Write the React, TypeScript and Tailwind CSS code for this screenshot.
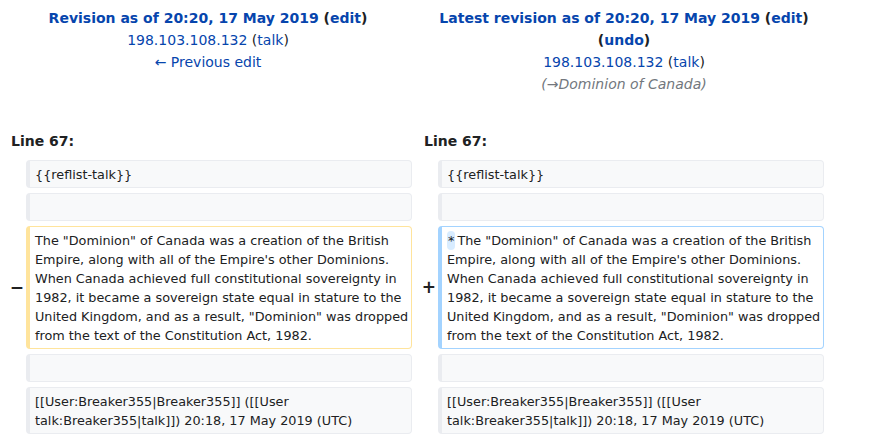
import React from 'react';

const para =
  'The "Dominion" of Canada was a creation of the British Empire, along with all of the Empire\'s other Dominions. When Canada achieved full constitutional sovereignty in 1982, it became a sovereign state equal in stature to the United Kingdom, and as a result, "Dominion" was dropped from the text of the Constitution Act, 1982.';

const sig = '[[User:Breaker355|Breaker355]] ([[User talk:Breaker355|talk]]) 20:18, 17 May 2019 (UTC)';

const Context = ({ children }: { children?: React.ReactNode }) => (
  <div className="min-h-[28px] rounded-[4px] border border-l-4 border-[#eaecf0] bg-[#f8f9fa] pl-[5px] pr-[2px] py-[3.5px] whitespace-pre-wrap break-words">
    {children}
  </div>
);

const Marker = ({ sign }: { sign?: string }) => (
  <div className="flex items-center justify-end pr-[2px] text-[17px] font-bold leading-none text-[#202122]">{sign}</div>
);

const App = () => {
  return (
    <div className="w-[874px] h-[439px] overflow-hidden bg-white text-[#202122] font-['DejaVu_Sans',sans-serif]">
      {/* шапка диффа */}
      <div className="grid grid-cols-[408px_408px] gap-x-2 pl-1 pt-[7px] text-[14px] leading-[22px] text-center">
        <div>
          <div className="font-bold">
            <a className="text-[#0645ad]">Revision as of 20:20, 17 May 2019</a> (<a className="text-[#0645ad]">edit</a>)
          </div>
          <div>
            <a className="text-[#0645ad]">198.103.108.132</a> (<a className="text-[#0645ad]">talk</a>)
          </div>
          <div>
            <a className="text-[#0645ad]">← Previous edit</a>
          </div>
        </div>
        <div>
          <div className="font-bold">
            <a className="text-[#0645ad]">Latest revision as of 20:20, 17 May 2019</a> (<a className="text-[#0645ad]">edit</a>)
          </div>
          <div className="font-bold">
            (<a className="text-[#0645ad]">undo</a>)
          </div>
          <div>
            <a className="text-[#0645ad]">198.103.108.132</a> (<a className="text-[#0645ad]">talk</a>)
          </div>
          <div className="italic text-[#72777d]">(→Dominion of Canada)</div>
        </div>
      </div>

      {/* строки */}
      <div className="mt-[35px] grid grid-cols-[22px_386px_26px_386px] gap-y-[5px] pl-1 text-[12.8px] leading-[19px]">
        <div className="col-span-2 pl-[7px] text-[14px] leading-[22px] font-bold mb-[3px]">Line 67:</div>
        <div className="col-span-2 pl-[12px] text-[14px] leading-[22px] font-bold mb-[3px]">Line 67:</div>

        <Marker />
        <Context>{'{{reflist-talk}}'}</Context>
        <Marker />
        <Context>{'{{reflist-talk}}'}</Context>

        <Marker />
        <Context />
        <Marker />
        <Context />

        <Marker sign="−" />
        <div className="rounded-[4px] border border-l-4 border-[#ffe49c] bg-white pl-[5px] pr-[2px] py-[3.5px] whitespace-pre-wrap">
          {para}
        </div>
        <Marker sign="+" />
        <div className="rounded-[4px] border border-l-4 border-[#a3d3ff] bg-white pl-[5px] pr-[2px] py-[3.5px] whitespace-pre-wrap">
          <span className="inline-block rounded-[4px] bg-[#d8ecff] px-[1px] leading-[19px] mr-[2px]">*</span>
          {para}
        </div>

        <Marker />
        <Context />
        <Marker />
        <Context />

        <Marker />
        <Context>{sig}</Context>
        <Marker />
        <Context>{sig}</Context>
      </div>
    </div>
  );
};

export default App;
